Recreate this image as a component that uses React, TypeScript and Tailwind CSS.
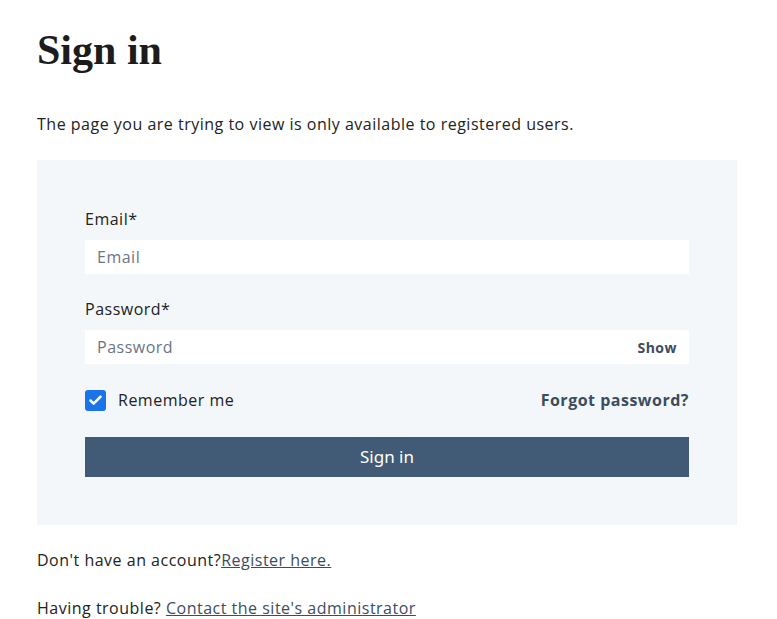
import { Check } from 'lucide-react'

const body = "font-['Open_Sans',sans-serif] tracking-[0.5px]"

export default function App() {
  return (
    <div className={`min-h-screen bg-white px-[37px] pt-[22px] text-[#222] ${body}`}>
      <h1 className="font-['Liberation_Serif',serif] text-[42px] font-bold leading-[56px] tracking-normal text-[#1c1c1c]">
        Sign in
      </h1>
      <p className="mt-[34px] text-[16px] leading-6">
        The page you are trying to view is only available to registered users.
      </p>

      <div className="mt-6 w-[700px] bg-[#f3f7fa] px-12 pb-12 pt-[47px]">
        <label className="block text-[16px] leading-6">Email*</label>
        <div className="mt-[9px] flex h-[34px] items-center bg-white px-3 text-[16px] text-[#6a7586]">
          Email
        </div>

        <label className="mt-[23px] block text-[16px] leading-6">Password*</label>
        <div className="mt-[9px] flex h-[34px] items-center justify-between bg-white pl-3 pr-3 text-[16px]">
          <span className="text-[#6a7586]">Password</span>
          <span className="text-[14px] font-bold text-[#3d4d60]">Show</span>
        </div>

        <div className="mt-6 flex h-6 items-center justify-between">
          <div className="flex items-center">
            <span className="flex h-[21px] w-[21px] items-center justify-center rounded-[3px] bg-[#1a73e8]">
              <Check size={15} strokeWidth={4} className="text-white" />
            </span>
            <span className="ml-3 text-[16px]">Remember me</span>
          </div>
          <span className="text-[16px] font-bold text-[#3d4d60]">Forgot password?</span>
        </div>

        <button className="mt-[25px] flex h-10 w-full items-center justify-center bg-[#415b76] font-['Noto_Sans',sans-serif] text-[17px] tracking-normal text-white">
          Sign in
        </button>
      </div>

      <p className="mt-[23px] text-[16px] leading-6">
        Don't have an account?<a className="text-[#3d4d60] underline">Register here.</a>
      </p>
      <p className="mt-6 text-[16px] leading-6">
        Having trouble? <a className="text-[#3d4d60] underline">Contact the site's administrator</a>
      </p>
    </div>
  )
}
